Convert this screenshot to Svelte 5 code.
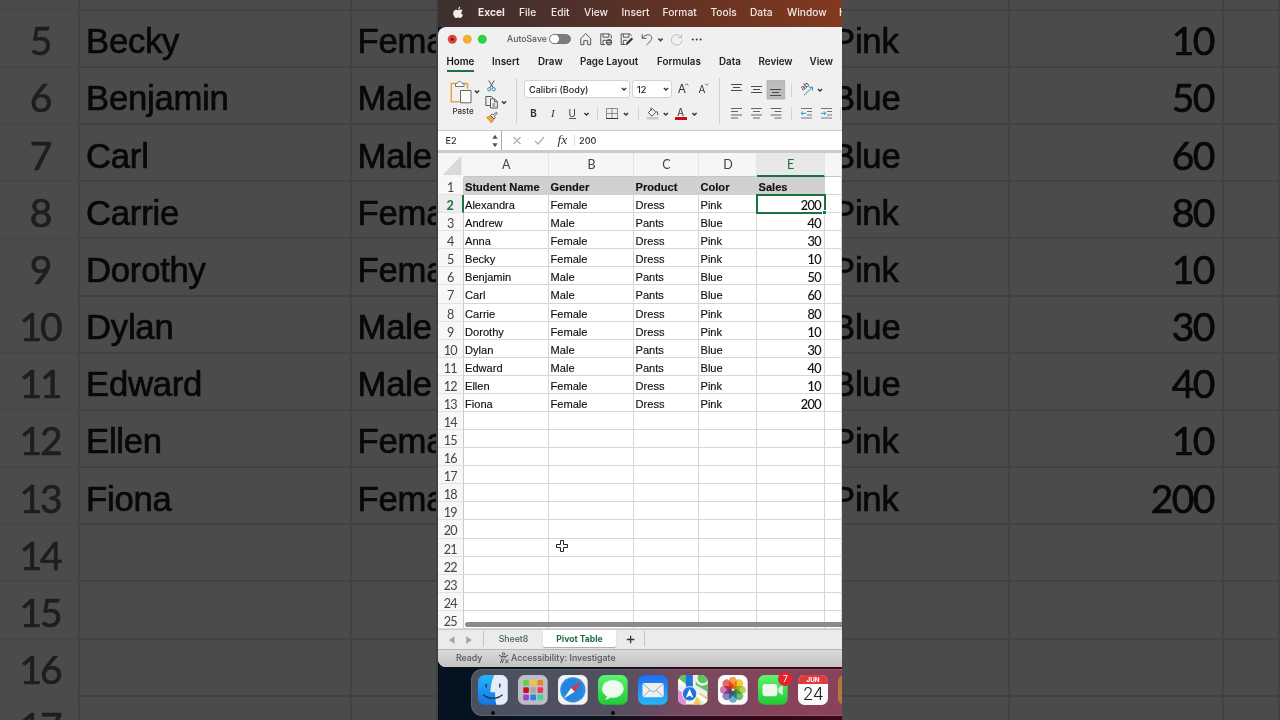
<script>
  const students = [
    ['Alexandra', 'Female', 'Dress', 'Pink', 200],
    ['Andrew', 'Male', 'Pants', 'Blue', 40],
    ['Anna', 'Female', 'Dress', 'Pink', 30],
    ['Becky', 'Female', 'Dress', 'Pink', 10],
    ['Benjamin', 'Male', 'Pants', 'Blue', 50],
    ['Carl', 'Male', 'Pants', 'Blue', 60],
    ['Carrie', 'Female', 'Dress', 'Pink', 80],
    ['Dorothy', 'Female', 'Dress', 'Pink', 10],
    ['Dylan', 'Male', 'Pants', 'Blue', 30],
    ['Edward', 'Male', 'Pants', 'Blue', 40],
    ['Ellen', 'Female', 'Dress', 'Pink', 10],
    ['Fiona', 'Female', 'Dress', 'Pink', 200]
  ]
  const titles = ['Student Name', 'Gender', 'Product', 'Color', 'Sales']
  const letters = ['A', 'B', 'C', 'D', 'E', '']
  const empty = ['', '', '', '', '']

  // sheet rows 2..25, the ones past the data stay blank
  const rows = Array.from({ length: 24 }, (_, i) => ({ n: i + 2, cells: students[i] ?? empty }))
  // only the bottom edge of the first one is visible, so it carries no text
  const bigRows = [{ n: '', cells: empty }, ...rows.slice(3, 16)]

  // label + width of its slot
  const menus = [
    ['File', 32],
    ['Edit', 33],
    ['View', 37.5],
    ['Insert', 41],
    ['Format', 48],
    ['Tools', 39.5],
    ['Data', 37],
    ['Window', 52],
    ['Help', 30]
  ]
  const tabs = [
    ['Home', 45.5],
    ['Insert', 46],
    ['Draw', 42],
    ['Page Layout', 77],
    ['Formulas', 62],
    ['Data', 39.5],
    ['Review', 51],
    ['View', 30]
  ]

  const petals = ['#f7931e', '#f5c21b', '#a8cf38', '#4db56a', '#5a9fd4', '#7b72b8', '#c668a8', '#ef4b4b']
  const tiles = ['#5bd147', '#f9c22e', '#f4801f', '#c4102c', '#a9a9ab', '#f0355b', '#9b3fd1', '#2f7df0', '#43d696']
</script>

{#snippet chevron(x, y)}
  <path class="chev" d="M{x - 2.1} {y - 1.1}l2.1 2.2 2.1-2.2" />
{/snippet}

<div class="screen">
  <div class="side left">
    {#each bigRows as row}
      <div class="big-row">
        <span class="big-n">{row.n}</span>
        <span class="big-c">{row.cells[0]}</span>
        <span class="big-c">{row.cells[1]}</span>
      </div>
    {/each}
  </div>

  <main class="phone">
    <nav class="menubar">
      <svg class="apple" width="12" height="14" viewBox="0 0 12 14">
        <path d="M8.2.8c.1 1.2-.9 2.5-2.2 2.5C5.900 2.100 7 1 8.200.8zM6.100 4.200c.5 0 1.100-.6 2.200-.6.9 0 1.700.5 2.200 1.100-1.800 1.100-1.500 3.700.4 4.400-.5 1.300-1.500 3-2.600 3-.8 0-1.100-.5-2.100-.5s-1.300.5-2.100.5C2.800 12.100 1.200 9.500 1.200 7.300c0-2.300 1.400-3.600 2.800-3.600 1 0 1.600.5 2.100.5z" fill="#f2ebe8" />
      </svg>
      <b>Excel</b>
      {#each menus as [label, w]}
        <span style="width: {w}px">{label}</span>
      {/each}
    </nav>

    <section class="window">
      <header class="titlebar">
        <svg width="42" height="24" viewBox="446 27 42 24">
          <circle cx="452.3" cy="39.3" r="4.5" fill="#e0443e" />
          <circle cx="452.3" cy="39.3" r="1.5" fill="#7d1012" />
          <circle cx="467.3" cy="39.3" r="4.5" fill="#eeb02f" />
          <circle cx="482.3" cy="39.3" r="4.5" fill="#2fd143" />
        </svg>
        <span class="autosave">AutoSave</span>
        <span class="toggle"></span>
        <svg width="134" height="24" viewBox="574 27 134 24" class="line">
          <path d="M580.800 38.500L585.700 33.600 590.700 38.500V44.700H587.700V40.700H583.800V44.700H580.800z" />
          <!-- save with sync mark -->
          <path d="M605 44.500H600.800V33.900H609.400L611.300 35.800V38.500M603 34V37.200H608.800V34M603 44.300V40.300H606" />
          <circle cx="609" cy="42.200" r="3.100" fill="#555" stroke="none" />
          <path d="M607.200 41.500h3.200M607.600 43.200h3.200" stroke="#efefef" stroke-width=".8" />
          <!-- save as -->
          <path d="M625.500 44.500H621.200V33.900H629.700L631.600 35.800M623.300 34V37.200H629V34M623.300 44.300V40.300H627" />
          <path d="M626 44.800l.6-2 5-5 1.300 1.300-5 5z" fill="#333" stroke="#333" stroke-width=".5" />
          <path d="M642.200 34.200V38.300H646.400M642.500 38C645 34.500 649.500 33.700 651.200 36.200 653 39.300 649.500 42.300 646.500 45" />
          {@render chevron(660.5, 39.6)}
          <path d="M681.600 34V37.600H678M681.300 37.300A5.300 5.300 0 1 0 682 40.500" stroke="#bdbdbd" />
          <g fill="#333" stroke="none">
            <circle cx="692.8" cy="39.5" r="1" /><circle cx="696.7" cy="39.5" r="1" /><circle cx="700.6" cy="39.5" r="1" />
          </g>
        </svg>
      </header>

      <nav class="tabs">
        {#each tabs as [label, w], i}
          <span class="tab" style="width: {w}px"><span class:active={i === 0}>{label}</span></span>
        {/each}
      </nav>

      <div class="ribbon">
        <svg class="line" width="78" height="54" viewBox="438 76 78 54">
          <path d="M456 83.500H451.300V101.800H459.500M464 83.500H467.500V89" stroke="#e8a33d" stroke-width="1.5" />
          <path d="M455.500 86.500V83.300H457.500C457.700 80.800 461.600 80.800 461.800 83.300H464V86.500z" fill="#fafafa" stroke="#777" />
          <path d="M460.500 90.500H471V102.800H460.500z" fill="#fafafa" stroke="#666" />
          {@render chevron(477, 91.7)}
          <text x="452.6" y="114" class="paste">Paste</text>
          <path d="M488.800 80.500l4.500 7.500M494.200 80.500l-4.500 7.500" />
          <circle cx="489.2" cy="89.3" r="1.6" stroke="#2f8fc4" /><circle cx="493.8" cy="89.3" r="1.6" stroke="#2f8fc4" />
          <path d="M490 105.500H485.900V96.500H491.500L493 98" />
          <path d="M490.500 98.800H494.500L497.300 101.600V108H490.500zM494.300 99V101.800H497M492.300 104h3M492.300 106h3" fill="#fafafa" />
          {@render chevron(504, 102.3)}
          <path d="M486.500 117.500l4-1.800 3.500 3.300-2.500 4z" fill="#f0a640" stroke="#c67a1a" stroke-width=".7" />
          <path d="M490.500 115.500l3.500 3.500 1.300-1.500-1-1.300 3-2.800-1-1.100-3 2.500-1.100-.8z" fill="#fafafa" />
        </svg>

        <div class="fonts">
          <div class="pickers">
            <span class="picker name">Calibri (Body)<svg width="8" height="8" viewBox="0 0 8 8">{@render chevron(4, 4)}</svg></span>
            <span class="picker size">12<svg width="8" height="8" viewBox="0 0 8 8">{@render chevron(4, 4)}</svg></span>
            <svg class="line" width="40" height="18" viewBox="674 81 40 18">
              <text x="677.7" y="93.5" class="a-big">A</text>
              <path d="M685.200 86.500l1.600-1.800 1.600 1.800" stroke="#2e9a63" />
              <text x="698.5" y="93.5" class="a-small">A</text>
              <path d="M705.200 84.700l1.500 1.700 1.500-1.700" stroke="#2f8fc4" />
            </svg>
          </div>
          <svg class="line" width="190" height="20" viewBox="524 104 190 20">
            <text x="530.3" y="117" class="fmt bold">B</text>
            <text x="551" y="117" class="fmt italic">I</text>
            <text x="568.5" y="116.5" class="fmt">U</text>
            <path d="M569 118.500h7" />
            {@render chevron(586.5, 114)}
            <path class="sep" d="M597.500 107v13M638.500 107v13" />
            <path d="M606.500 108.500h11M606.500 108.500v10M617.500 108.500v10M612 108.500v10M606.500 113.500h11" stroke="#8d8d8d" />
            <path d="M606 118.500h12" stroke="#333" />
            {@render chevron(626, 114)}
            <path d="M648.300 112.800l4-4.200 3.600 3.700-3.800 3.900zM651 107.600v3M656.500 111c1.500 1.200 1.300 2.600 1.100 4" />
            <path d="M646.800 117h11.500v2.600h-11.500z" fill="#c9c9c9" stroke="none" />
            {@render chevron(665.8, 114)}
            <text x="677.3" y="115.8" class="fmt">A</text>
            <path d="M675 117h12v2.900h-12z" fill="#cf0a18" stroke="none" />
            {@render chevron(694.5, 114)}
          </svg>
        </div>

        <svg class="line aligns" width="122" height="54" viewBox="720 76 122 54">
          <path d="M767 80.500h17.700v18.600h-17.700z" fill="#bcbcbc" stroke="#a9a9a9" stroke-width=".7" />
          <path d="M731 84.500h11M733 87.500h7M731 90.500h11M751 86.500h11M753 89.500h7M751 92.500h11M770 89.500h11M772 92.500h7M770 95.500h11" stroke="#4a4a4a" />
          <path class="sep" d="M791.500 83v14M791.500 107v13M840.500 107v13" />
          <text x="0" y="0" transform="translate(803 91) rotate(-40)" class="ab">ab</text>
          <path d="M804 95.300l8-7.800M809 87.200h3.500v3.500" stroke="#2f8fc4" />
          {@render chevron(820, 90)}
          <path d="M731 108.500h11M731 111.500h7M731 115h11M731 118h7M751 108.500h11M753 111.500h7M751 115h11M753 118h7M770.500 108.500h11M774.500 111.500h7M770.500 115h11M774.500 118h7" stroke="#666" />
          <path d="M801 108.500h11M807 111.500h5M807 115h5M801 118h11M821 108.500h11M827 111.500h5M827 115h5M821 118h11" stroke="#777" />
          <path d="M806 113.300h-4.600M803 111.500l-1.800 1.800 1.800 1.800M821 113.300h4.600M824 111.500l1.800 1.800-1.800 1.800" stroke="#2f8fc4" />
        </svg>
      </div>

      <div class="formula">
        <div class="namebox">
          E2
          <svg width="8" height="14" viewBox="0 0 8 14"><path d="M4 .8l2.700 3.900H1.300zM4 13.200l2.700-3.900H1.300z" fill="#555" /></svg>
        </div>
        <svg width="68" height="20" viewBox="504 131 68 20" class="line">
          <path d="M513.500 137l7 7M520.500 137l-7 7M535 141l3 3 6-7" stroke="#b0b0b0" stroke-width="1.3" />
          <text x="557.5" y="144.3" class="fx">fx</text>
        </svg>
        <span class="value">200</span>
      </div>

      <div class="sheet">
        <div class="row head">
          <span class="corner"></span>
          {#each letters as letter}
            <span class="letter" class:on={letter === 'E'}>{letter}</span>
          {/each}
        </div>
        <div class="row titles">
          <span class="n">1</span>
          {#each titles as title}
            <span class="cell">{title}</span>
          {/each}
          <span class="cell"></span>
        </div>
        {#each rows as row}
          <div class="row">
            <span class="n" class:on={row.n === 2}>{row.n}</span>
            {#each row.cells as value, i}
              <span class="cell" class:num={i === 4} class:selected={row.n === 2 && i === 4}>{value}</span>
            {/each}
            <span class="cell"></span>
          </div>
        {/each}
        <div class="scrollbar"></div>
        <svg class="cursor" width="14" height="14" viewBox="0 0 14 14">
          <path d="M5.500 1.500h3v4h4v3h-4v4h-3v-4h-4v-3h4z" fill="#fff" stroke="#222" />
        </svg>
      </div>

      <div class="sheets">
        <svg width="46" height="20" viewBox="438 629 46 20">
          <path d="M454.500 635.300v7.600l-5.500-3.800zM466.200 635.300v7.600l5.500-3.800z" fill="#a3a3a3" />
          <path d="M483.500 630v16" stroke="#c4c4c4" />
        </svg>
        <span class="sheet-tab">Sheet8</span>
        <span class="sheet-tab current">Pivot Table</span>
        <svg class="add" width="29" height="20" viewBox="616 629.5 29 20">
          <path d="M626.800 639h7.600M630.600 635.200v7.600" stroke="#333" stroke-width="1.3" />
          <path d="M644.500 630v16" stroke="#c4c4c4" />
        </svg>
      </div>

      <footer class="status">
        <span class="ready">Ready</span>
        <svg class="line" width="12" height="12" viewBox="0 0 12 12">
          <circle cx="5.5" cy="1.9" r="1.2" />
          <path d="M.8 3.400L4 4.600v2.800L2.300 11M10.200 3.400L7 4.600v1.900M4 4.600h3M5.500 7.500L4.300 11M7.300 7.500l3.200 3.700M10.500 7.500l-3.200 3.700" />
        </svg>
        <span class="access">Accessibility: Investigate</span>
      </footer>
    </section>

    <div class="dock">
      <span class="app open">
        <svg viewBox="0 0 30 30">
          <defs><linearGradient id="finder" x2="0" y2="1"><stop stop-color="#27b4fb" /><stop offset="1" stop-color="#1474e4" /></linearGradient></defs>
          <rect width="30" height="30" rx="6.5" fill="url(#finder)" />
          <path d="M16.500 0H23.500A6.500 6.500 0 0 1 30 6.500V23.500A6.500 6.500 0 0 1 23.500 30H18.500C17.500 26 17.300 22 17.300 17.500H12.500C12.800 10.500 14 5 16.500 0z" fill="#e4edf6" />
          <path d="M8.300 9.200v2.800M22 9.200v2.800M5.800 20.300c5 4.500 13.500 4.500 18.500 0" fill="none" stroke="#17324f" stroke-width="1.4" stroke-linecap="round" />
        </svg>
      </span>
      <span class="app">
        <svg viewBox="0 0 30 30">
          <rect width="30" height="30" rx="6.5" fill="#bcbec6" />
          {#each tiles as tile, i}
            <rect x={5.3 + (i % 3) * 7.2} y={5 + Math.floor(i / 3) * 7.4} width="5.7" height="5.7" rx="1.2" fill={tile} />
          {/each}
        </svg>
      </span>
      <span class="app">
        <svg viewBox="0 0 30 30">
          <rect width="30" height="30" rx="6.5" fill="#f0f2f5" />
          <circle cx="15" cy="15" r="12.8" fill="#2585dd" />
          <circle cx="15" cy="15" r="11.5" fill="none" stroke="#8cc5f5" stroke-width="1" stroke-dasharray=".5 1.5" />
          <path d="M24.500 6L13.300 13.200l3.500 3.600z" fill="#e6323a" />
          <path d="M5.500 24l7.800-10.800 3.500 3.600z" fill="#f3f5f8" />
        </svg>
      </span>
      <span class="app open">
        <svg viewBox="0 0 30 30">
          <defs><linearGradient id="green" x2="0" y2="1"><stop stop-color="#5df36d" /><stop offset="1" stop-color="#1fca35" /></linearGradient></defs>
          <rect width="30" height="30" rx="6.5" fill="url(#green)" />
          <ellipse cx="15" cy="14" rx="11" ry="9" fill="#eefaee" />
          <path d="M9 20.500c.3 1.800-.5 3.200-2 4.200 2.500.3 4.600-.8 5.800-2.500z" fill="#e2f6e2" />
        </svg>
      </span>
      <span class="app">
        <svg viewBox="0 0 30 30">
          <defs><linearGradient id="mail" x2="0" y2="1"><stop stop-color="#1d6ef0" /><stop offset="1" stop-color="#27b5f8" /></linearGradient></defs>
          <rect width="30" height="30" rx="6.5" fill="url(#mail)" />
          <rect x="4.5" y="8" width="21.5" height="14.5" rx="2" fill="#eeefef" />
          <path d="M5.300 9l8.200 7.300c1 .9 2.500.9 3.500 0L25.200 9M5.300 21.800l6.700-6.500M25.200 21.800l-6.700-6.500" fill="none" stroke="#8b9299" stroke-width=".8" />
        </svg>
      </span>
      <span class="app">
        <svg viewBox="0 0 30 30">
          <clipPath id="map"><rect width="30" height="30" rx="6.5" /></clipPath>
          <g clip-path="url(#map)">
            <path d="M0 0h30v30H0z" fill="#edf1ed" />
            <path d="M0 0h9v13L0 5zM18 0h12v17L18 10z" fill="#5ac65c" />
            <path d="M0 15l8 5v10H0z" fill="#e58ed1" />
            <path d="M22 18l8 5v7H15z" fill="#f4c93f" />
            <path d="M18 17l12 8v5h-7z" fill="#e6e8e6" />
            <circle cx="25" cy="3" r="6.5" fill="none" stroke="#f1f3f1" stroke-width="2.5" />
            <path d="M0 5l30 23" stroke="#fff" stroke-width="3" />
            <path d="M8 0h7v17h-7z" fill="#1f74dc" />
            <circle cx="11.7" cy="19" r="7.3" fill="#1f74dc" stroke="#e9f3ff" />
            <path d="M11.700 14l3.800 9-3.800-2-3.800 2z" fill="#fff" />
          </g>
        </svg>
      </span>
      <span class="app">
        <svg viewBox="0 0 30 30">
          <rect width="30" height="30" rx="6.5" fill="#fbfbfb" />
          {#each petals as petal, i}
            <rect x="11" y="2" width="8" height="12" rx="4" fill={petal} class="petal" transform="rotate({i * 45} 15 15)" />
          {/each}
        </svg>
      </span>
      <span class="app">
        <svg viewBox="0 0 30 30">
          <rect width="30" height="30" rx="6.5" fill="url(#green)" />
          <rect x="4.5" y="9" width="15" height="12.5" rx="3" fill="#eef8ee" />
          <path d="M20.500 13.500l4.500-3.700v11l-4.500-3.700z" fill="#dcefdc" />
        </svg>
        <i class="badge">7</i>
      </span>
      <span class="app calendar"><span class="month">JUN</span><span class="day">24</span></span>
      <span class="app notes"></span>
    </div>
  </main>

  <div class="side right">
    {#each bigRows as row}
      <div class="big-row">
        <span class="big-c">{row.cells[3]}</span>
        <span class="big-c big-num">{row.cells[4]}</span>
        <span class="big-c"></span>
      </div>
    {/each}
  </div>
</div>

<style>
  :global(body) {
    margin: 0;
    background: #4b4b4b;
  }

  .screen {
    display: grid;
    grid-template-columns: 438px 404px 438px;
    width: 1280px;
    height: 720px;
    overflow: hidden;
    font-family: Inter, 'Liberation Sans', sans-serif;
    white-space: nowrap;
  }

  svg {
    display: block;
    flex: none;
  }

  /* enlarged sheet behind the phone frame */
  .side {
    height: 720px;
    overflow: hidden;
    background: #4b4b4b;
    font: 34.7px/57.18px 'Liberation Sans', Arial, sans-serif;
    letter-spacing: -0.25px;
    color: #080808;
  }

  .big-row {
    display: grid;
    height: 57.18px;
    filter: blur(0.7px);
  }

  .big-row:first-child {
    margin-top: -46.5px;
  }

  .left .big-row {
    grid-template-columns: 80px 271.5px 1fr;
  }

  .right .big-row {
    grid-template-columns: 168px 214px 1fr;
  }

  .big-n,
  .big-c {
    box-sizing: border-box;
    min-width: 0;
    height: 57.18px;
    padding: 2.5px 0 0 6px;
    border-right: 2px solid #424242;
    border-bottom: 2px solid #424242;
    overflow: hidden;
    -webkit-text-stroke: 0.7px;
  }

  .big-n {
    padding: 1.5px 0 0 2px;
    border-bottom-color: #474747;
    font-family: Lato, sans-serif;
    font-size: 39px;
    letter-spacing: -2.2px;
    text-align: center;
    color: #1e1e1e;
  }

  .right .big-c:first-child {
    padding: 2.5px 0 0;
    text-indent: -10px;
  }

  .right .big-num {
    padding: 1.5px 8px 0 0;
    font-family: Lato, sans-serif;
    font-size: 39px;
    letter-spacing: -1.5px;
    text-align: right;
  }

  .phone {
    position: relative;
    display: flex;
    flex-direction: column;
    height: 720px;
    overflow: hidden;
    background: linear-gradient(90deg, #04131f 0, #0a1220 40%, #2c0a1c 60%, #3a0716);
  }

  .menubar {
    display: flex;
    align-items: flex-start;
    flex: none;
    height: 26.5px;
    padding-left: 14px;
    background: linear-gradient(90deg, #3e302f, #50302a 35%, #6b3422 70%, #81391f);
    font-size: 10.2px;
    font-weight: 500;
    line-height: 25px;
    color: #f2e8e4;
  }

  .apple {
    margin-top: 6px;
  }

  .menubar b {
    flex: none;
    width: 41px;
    padding-left: 14px;
    font-weight: 700;
  }

  .menubar span {
    flex: none;
  }

  .window {
    display: flex;
    flex-direction: column;
    flex: none;
    width: 404px;
    height: 639.5px;
    margin-top: 0.5px;
    border-radius: 8px 0 0 8px;
    overflow: hidden;
    background: #f0f0f0;
    color: #222;
  }

  .line {
    fill: none;
    stroke: #555;
    stroke-width: 1;
  }

  .line text {
    stroke: none;
    fill: #333;
  }

  .chev {
    fill: none;
    stroke: #333;
    stroke-width: 1.4;
  }

  .sep {
    stroke: #d2d2d2;
  }

  .titlebar {
    display: flex;
    align-items: center;
    height: 24px;
    padding-left: 8px;
  }

  .autosave {
    width: 42px;
    padding-left: 19px;
    font-size: 8.7px;
    font-weight: 500;
    color: #555;
  }

  .toggle {
    box-sizing: border-box;
    width: 21.5px;
    height: 10.5px;
    margin-right: 3.5px;
    border: 1px solid #777;
    border-radius: 6px;
    background: radial-gradient(circle at 4.3px 50%, #fff 4.4px, #7c7c7c 4.9px);
  }

  .tabs {
    display: flex;
    height: 25px;
    padding-left: 8.5px;
    font-size: 9.8px;
    font-weight: 600;
    line-height: 22px;
    color: #222;
  }

  .tab {
    flex: none;
  }

  .active {
    display: inline-block;
    height: 18.5px;
    border-bottom: 2px solid #1a7242;
    color: #111;
  }

  .ribbon {
    display: flex;
    height: 54px;
  }

  .fonts {
    display: flex;
    flex-direction: column;
    gap: 6px;
    width: 195px;
    height: 44px;
    margin-top: 2px;
    padding: 2px 0 0 7px;
    border-left: 1px solid #d0d0d0;
    border-right: 1px solid #d0d0d0;
  }

  .pickers {
    display: flex;
    gap: 2px;
    height: 18px;
  }

  .picker {
    display: flex;
    align-items: center;
    justify-content: space-between;
    box-sizing: border-box;
    height: 18px;
    padding: 0 1px 0 4px;
    border: 1px solid #d2d2d2;
    border-radius: 3px;
    background: #fff;
    font-size: 9.1px;
    font-weight: 500;
    color: #222;
  }

  .name {
    width: 106px;
  }

  .size {
    width: 40px;
  }

  .paste {
    font-size: 7.9px;
    font-weight: 500;
  }

  .a-big {
    font-size: 12px;
  }

  .a-small {
    font-size: 10px;
  }

  .fmt {
    font-size: 9.8px;
  }

  .bold {
    font-weight: 700;
  }

  .italic {
    font-family: 'Liberation Serif', serif;
    font-size: 11px;
    font-style: italic;
  }

  .ab {
    font-size: 7.5px;
  }

  .fx {
    font: italic 13.5px 'Liberation Serif', serif;
  }

  .formula {
    display: flex;
    align-items: center;
    box-sizing: border-box;
    height: 23px;
    border-top: 1px solid #c8c8c8;
    border-bottom: 3px solid #cbcbcb;
    background: #fff;
    font-size: 9.2px;
    font-weight: 500;
    color: #333;
  }

  .namebox {
    display: flex;
    align-items: center;
    justify-content: space-between;
    box-sizing: border-box;
    width: 64px;
    height: 19px;
    margin-right: 2px;
    padding: 0 2px 0 7.5px;
    border-right: 1px solid #a9a9a9;
  }

  .value {
    padding-left: 4px;
    border-left: 1px solid #ddd;
    margin-left: 2px;
  }

  .sheet {
    position: relative;
    flex: none;
    width: 404px;
    height: 476px;
    overflow: hidden;
    background: #fff;
  }

  .row {
    display: grid;
    grid-template-columns: 25.5px 85.5px 85px 65px 58px 68px 1fr;
    height: 18.08px;
    font: 11.1px/21px 'Liberation Sans', Arial, sans-serif;
    color: #111;
  }

  .head {
    height: 24px;
    background: #f6f6f6;
  }

  .corner {
    margin: 2.5px 2px 2px 4.5px;
    background: #d9d9d9;
    clip-path: polygon(100% 0, 100% 100%, 0 100%);
  }

  .letter {
    box-sizing: border-box;
    height: 24px;
    border-right: 1px solid #e4e4e4;
    border-bottom: 1px solid #c6c6c6;
    font: 12.5px/24px Lato, sans-serif;
    text-align: center;
    text-indent: 1px;
    color: #444;
  }

  .letter.on {
    border-bottom: 2px solid #1a7242;
    background: #e8e8e8;
    text-indent: 0;
    color: #1a7242;
  }

  .n {
    box-sizing: border-box;
    height: 18.08px;
    border-right: 1px solid #c9c9c9;
    border-bottom: 1px solid #e2e2e2;
    background: #f7f7f7;
    font: 12.6px/21px Lato, sans-serif;
    letter-spacing: -0.7px;
    text-align: center;
    color: #444;
  }

  .n.on {
    border-right: 2px solid #1a7242;
    background: #ececec;
    font-weight: 700;
    color: #1a7242;
  }

  .cell {
    box-sizing: border-box;
    height: 18.08px;
    padding-left: 1.5px;
    border-right: 1px solid #d6d6d6;
    border-bottom: 1px solid #d6d6d6;
    -webkit-text-stroke: 0.15px;
  }

  .titles {
    font-weight: 700;
  }

  .titles .cell:not(:last-child) {
    border-color: #d0d0d0;
    background: #d0d0d0;
  }

  .num {
    padding-right: 3px;
    font-family: Lato, sans-serif;
    font-size: 12.6px;
    line-height: 21px;
    letter-spacing: -0.55px;
    text-align: right;
  }

  .selected {
    position: relative;
    z-index: 1;
    border: 0;
    padding-right: 4px;
    outline: 2px solid #1a7242;
    outline-offset: -1px;
  }

  .selected::after {
    content: '';
    position: absolute;
    right: -2px;
    bottom: -2px;
    width: 3px;
    height: 3px;
    border: 1px solid #fff;
    background: #1a7242;
  }

  .scrollbar {
    position: absolute;
    left: 27px;
    right: -8px;
    bottom: 2px;
    height: 5px;
    border-radius: 3px;
    background: #8b8b8b;
  }

  .cursor {
    position: absolute;
    left: 117px;
    top: 386px;
  }

  .sheets {
    display: flex;
    align-items: flex-start;
    flex: none;
    box-sizing: border-box;
    height: 20.5px;
    border-top: 1px solid #c9c9c9;
    border-bottom: 1px solid #b5b5b5;
    background: #ebebeb;
    font-size: 8.75px;
    font-weight: 500;
    line-height: 18.5px;
    color: #40614c;
  }

  .sheet-tab {
    width: 59px;
    height: 16.5px;
    text-align: center;
  }

  .current {
    width: 73px;
    border-radius: 0 0 2px 2px;
    background: #fff;
    box-shadow: 0 1px 1px #aaa;
    font-size: 8.65px;
    font-weight: 700;
    color: #1c6e41;
  }

  .status {
    display: flex;
    align-items: center;
    flex: 1;
    padding: 0 0 1px 18px;
    background: linear-gradient(#d9d9d9, #c3c3c3);
    font-size: 8.8px;
    font-weight: 500;
    color: #555;
  }

  .ready {
    width: 41.5px;
  }

  .access {
    padding-left: 1.5px;
  }

  .dock {
    display: flex;
    gap: 10.3px;
    flex: none;
    box-sizing: border-box;
    width: 400px;
    height: 47.5px;
    margin: 2px 0 0 33px;
    padding: 6.7px 0 0 7.3px;
    border-radius: 11px 0 0 11px;
    background: linear-gradient(90deg, #4b505e 0, #515061 35%, #754a60 52%, #87435b 80%, #8b4257);
    box-shadow: inset 0 0 0 1px #ffffff1c;
  }

  .app {
    position: relative;
    flex: none;
    width: 29.7px;
    height: 29.7px;
  }

  .app svg {
    width: 100%;
    height: 100%;
  }

  .petal {
    mix-blend-mode: multiply;
    opacity: 0.85;
  }

  .open::after {
    content: '';
    position: absolute;
    left: 13px;
    top: 36px;
    width: 3.5px;
    height: 3.5px;
    border-radius: 50%;
    background: #0a0a0c;
  }

  .badge {
    position: absolute;
    right: -4.5px;
    top: -3px;
    width: 14px;
    height: 14px;
    border-radius: 50%;
    background: #e5232e;
    font-size: 8.5px;
    font-style: normal;
    line-height: 14px;
    text-align: center;
    color: #fff;
  }

  .calendar {
    display: flex;
    flex-direction: column;
    border-radius: 6.5px;
    overflow: hidden;
    background: #fafafa;
    text-align: center;
    color: #222;
  }

  .month {
    height: 9px;
    background: #e33b3d;
    font-size: 6.3px;
    font-weight: 700;
    line-height: 10px;
    color: #fff;
  }

  .day {
    font-size: 17.5px;
    font-weight: 300;
    line-height: 20px;
    letter-spacing: -0.5px;
  }

  .notes {
    border-radius: 6.5px;
    background: #b07a3c;
  }
</style>
